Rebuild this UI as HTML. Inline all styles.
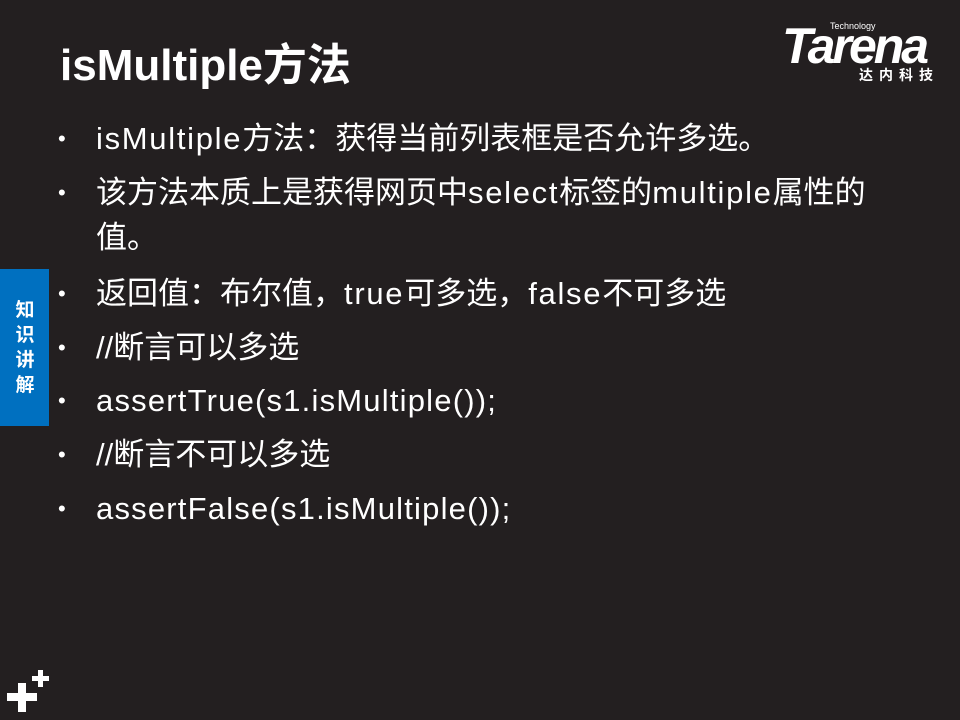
<!DOCTYPE html>
<html><head><meta charset="utf-8"><style>
body{margin:0;width:960px;height:720px;background:#231f20;position:relative;overflow:hidden;font-family:"Liberation Sans","Noto Sans CJK SC",sans-serif;color:#fff}
.t{position:absolute;left:60px;top:38px;font-size:44px;font-weight:bold;line-height:56px;white-space:nowrap}
.tab{position:absolute;left:0;top:269px;width:49px;height:157px;background:#0070c0}
.tab div{position:absolute;left:14px;top:29px;width:22px;font-size:19px;font-weight:bold;line-height:25px;text-align:center}
.b{position:absolute;left:96px;font-size:31px;line-height:46px;white-space:nowrap}
.b:before{content:"•";position:absolute;left:-38px;font-size:22px}
.b.n:before{content:""}
.l{letter-spacing:1.7px}
.logo{position:absolute;left:780px;top:18px}
.r{position:absolute;background:#fff}
</style></head><body>
<div class="t">isMultiple方法</div>
<div class="logo">
<div style="position:absolute;left:50px;top:3px;font-size:9px;color:#fff">Technology</div>
<div style="position:absolute;left:2px;top:4px;font-size:50px;font-weight:bold;font-style:italic;letter-spacing:-3px;line-height:48px">Tarena</div>
<div style="position:absolute;left:79px;top:47px;font-size:14px;font-weight:bold;letter-spacing:6px;white-space:nowrap">达内科技</div>
</div>
<div class="tab"><div>知识讲解</div></div>
<div class="b" style="top:116px"><span class="l">isMultiple</span>方法：获得当前列表框是否允许多选。</div>
<div class="b" style="top:170px">该方法本质上是获得网页中<span class="l">select</span>标签的<span class="l">multiple</span>属性的</div>
<div class="b n" style="top:215px">值。</div>
<div class="b" style="top:271px">返回值：布尔值，<span class="l">true</span>可多选，<span class="l">false</span>不可多选</div>
<div class="b" style="top:325px">//断言可以多选</div>
<div class="b l" style="top:378px;letter-spacing:1.2px">assertTrue(s1.isMultiple());</div>
<div class="b" style="top:432px">//断言不可以多选</div>
<div class="b l" style="top:486px;letter-spacing:1.2px">assertFalse(s1.isMultiple());</div>
<div class="r" style="left:7px;top:693px;width:30px;height:8px"></div>
<div class="r" style="left:18px;top:683px;width:8px;height:29px"></div>
<div class="r" style="left:32px;top:676px;width:17px;height:5px"></div>
<div class="r" style="left:38px;top:670px;width:5px;height:17px"></div>
</body></html>
